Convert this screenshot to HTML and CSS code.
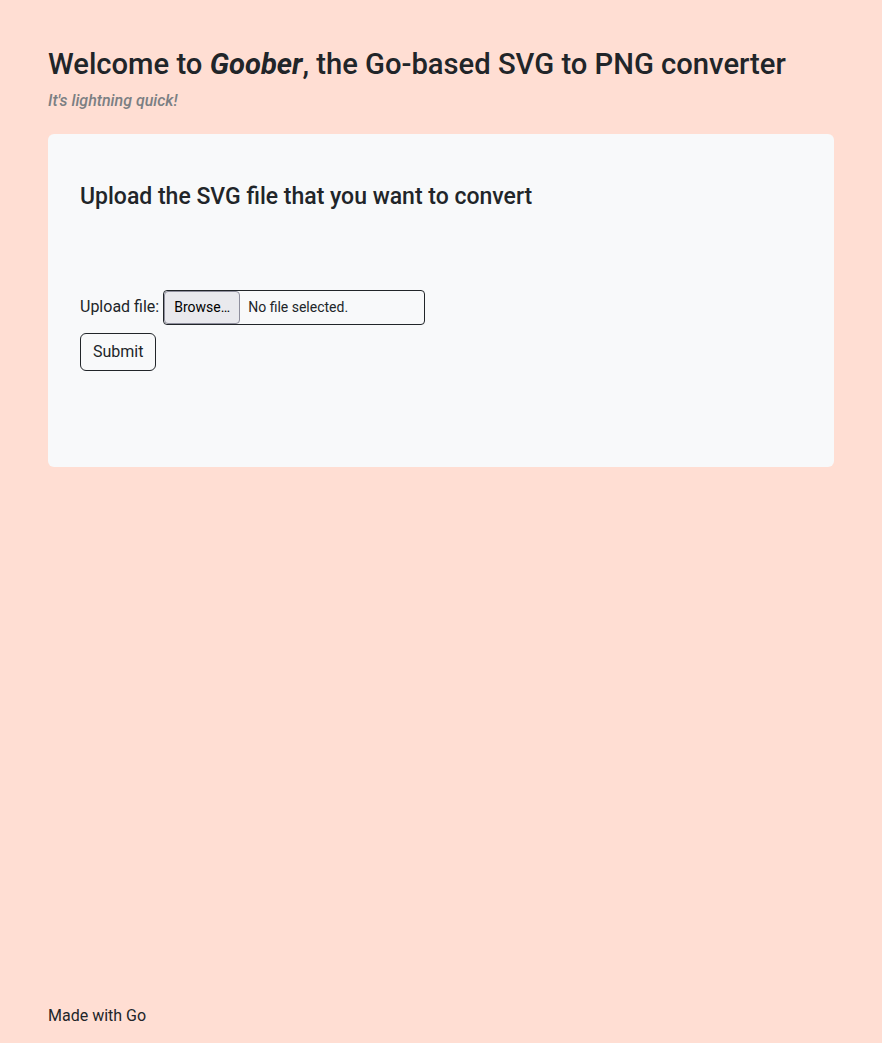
FILE: index.html
```html
<!DOCTYPE html>
<html lang="en">
<head>
<meta charset="utf-8">
<title>Goober</title>
<link rel="stylesheet" href="styles.css">
</head>
<body>
<div class="page">
  <header class="header">
    <h1 class="title">Welcome to <em>Goober</em>, the Go-based SVG to PNG converter</h1>
    <p class="tagline">It's lightning quick!</p>
  </header>
  <main class="card">
    <h2 class="card-title">Upload the SVG file that you want to convert</h2>
    <form class="form">
      <div class="row">
        <span class="label">Upload file:</span>
        <span class="file">
          <span class="browse">Browse…</span>
          <span class="file-status">No file selected.</span>
        </span>
      </div>
      <button type="button" class="submit">Submit</button>
    </form>
  </main>
  <footer class="footer">Made with Go</footer>
</div>
</body>
</html>
```
FILE: styles.css
```css
* { box-sizing: border-box; }
html, body { margin: 0; padding: 0; }
body {
  background: #ffded3;
  color: #212529;
  font-family: Roboto, "Liberation Sans", sans-serif;
  font-size: 16px;
  line-height: 1.5;
}
.page {
  min-height: 1043px;
  display: flex;
  flex-direction: column;
  padding: 47px 48px 0 48px;
}
.title {
  margin: 0;
  font-size: 29.2px;
  font-weight: 500;
  line-height: 1.2;
}
.title em { font-weight: 700; }
.tagline {
  margin: 7px 0 0 0;
  font-style: italic;
  font-weight: 500;
  color: #7b7f83;
}
.card {
  margin-top: 21px;
  background: #f8f9fa;
  border-radius: 6px;
  padding: 49px 32px 96px 32px;
}
.card-title {
  margin: 0;
  font-size: 23px;
  font-weight: 500;
  line-height: 1.2;
}
.form {
  margin-top: 79px;
  display: flex;
  flex-direction: column;
  align-items: flex-start;
  gap: 8px;
}
.row { display: flex; align-items: center; gap: 4px; }
.file {
  display: flex;
  align-items: center;
  width: 262px;
  height: 35px;
  border: 1px solid #212529;
  border-radius: 4px;
  font-size: 14px;
}
.browse {
  height: 33px;
  width: 76px;
  display: flex;
  align-items: center;
  justify-content: center;
  background: #e9e9ed;
  border: 1px solid #8f8f9d;
  border-radius: 4px;
  color: #000;
}
.file-status { margin-left: 8px; color: #212529; }
.submit {
  font-family: inherit;
  font-size: 16px;
  color: #212529;
  background: transparent;
  border: 1px solid #212529;
  border-radius: 6px;
  height: 38px;
  padding: 0 12px;
}
.footer {
  margin-top: auto;
  padding-bottom: 15px;
}
```
